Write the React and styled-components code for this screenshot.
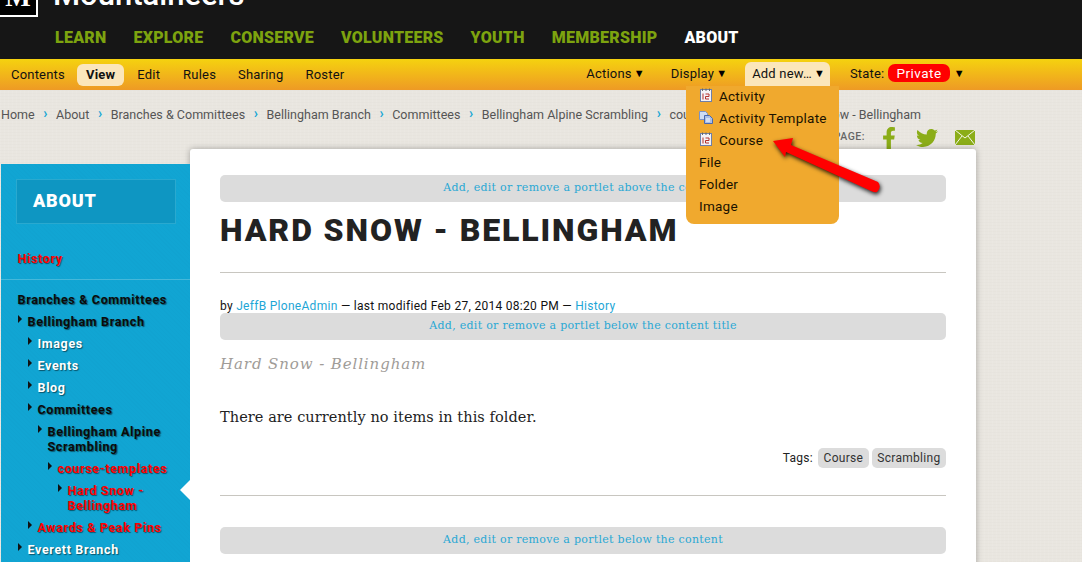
import React from 'react';
import styled, { createGlobalStyle } from 'styled-components';
import { FaFacebookF, FaTwitter } from 'react-icons/fa';

const sans = `Roboto, 'Liberation Sans', sans-serif`;
const slab = `'DejaVu Serif', 'Liberation Serif', serif`;

const GlobalStyle = createGlobalStyle`
  html, body {
    margin: 0;
    height: 562px;
    overflow: hidden;
    background-color: #e9e6e0;
    font-family: ${sans};
  }
  * { box-sizing: border-box; }
`;

const Page = styled.div`
  position: relative;
  width: 1082px;
  height: 562px;
  overflow: hidden;
  background-color: #e9e6e0;
  background-image:
    repeating-linear-gradient(0deg, rgba(120, 110, 90, 0.018) 0 1px, transparent 1px 3px),
    repeating-linear-gradient(90deg, rgba(255, 255, 255, 0.07) 0 1px, transparent 1px 4px);
`;

const Header = styled.header`
  height: 59px;
  background: #161616;
  overflow: hidden;
`;

const LogoRow = styled.div`
  height: 17px;
  display: flex;
  align-items: flex-end;
  gap: 15px;
`;

const LogoBox = styled.div`
  flex: none;
  width: 38px;
  height: 40px;
  border: 2px solid #fff;
  border-left: none;
  background: #000;
  color: #fff;
  font: 700 27px/37px 'Liberation Serif', serif;
  text-align: center;
`;

const LogoText = styled.div`
  color: #fff;
  font: 500 31px/33px ${sans};
  margin-bottom: 6px;
`;

const MainNav = styled.nav`
  display: flex;
  gap: 27px;
  padding: 11px 0 0 55px;
`;

const MainLink = styled.a`
  color: ${p => (p.$active ? '#fff' : '#7da30f')};
  font: 900 16px/19px ${sans};
  letter-spacing: 0.25px;
`;

const Toolbar = styled.div`
  height: 31px;
  display: flex;
  align-items: center;
  background: linear-gradient(#f5d20f, #ee9a25);
  font-size: 13px;
  color: #111;
`;

const ToolGroup = styled.div`
  display: flex;
  align-items: center;
  margin-left: 11px;
`;

const ActionGroup = styled.div`
  display: flex;
  align-items: flex-start;
  align-self: flex-start;
  margin-left: 242px;
  padding-top: 3px;
`;

const ToolItem = styled.a`
  display: flex;
  align-items: center;
  gap: 2px;
  height: ${p => (p.$tall ? 24 : 22)}px;
  margin-left: ${p => p.$space || 0}px;
  padding: 0 ${p => (p.$tall ? 7 : p.$pill ? 9 : 0)}px ${p => (p.$tall ? 2 : 0)}px;
  border-radius: ${p => (p.$tall ? '6px 6px 0 0' : '6px')};
  letter-spacing: 0.2px;
  font-weight: ${p => (p.$bold ? 700 : 400)};
  background: ${p => (p.$pill ? '#fbe6bb' : 'transparent')};
`;

const Caret = styled.span`
  width: 9px;
  font-size: 11px;
  line-height: 11px;
  color: #000;
  text-align: center;
`;

const StateBadge = styled.span`
  margin: 0 2px;
  background: #f00;
  color: #fff;
  height: 18px;
  line-height: 18px;
  padding: 0 8px;
  border-radius: 7px;
  font-size: 13.5px;
  letter-spacing: 0.5px;
`;

const Breadcrumbs = styled.div`
  height: 36px;
  padding: 17px 0 0 1px;
  display: flex;
  gap: 8.500px;
  font-size: 12.5px;
  line-height: 16px;
  color: #555;
  letter-spacing: 0.02px;
  white-space: nowrap;
`;

const Crumb = styled.a``;

const CrumbSep = styled.span`
  color: #16a6d5;
  font-size: 14px;
  font-weight: 700;
  line-height: 13px;
`;

const ShareRow = styled.div`
  height: 23px;
  width: 975px;
  display: flex;
  align-items: center;
  justify-content: flex-end;
  font-size: 10.5px;
  font-weight: 500;
  letter-spacing: 0.5px;
  color: #666;
`;

const ShareLabel = styled.span`
  margin-right: 13px;
  margin-bottom: 3px;
`;

const ShareIcon = styled.span`
  display: flex;
  margin-right: ${p => p.$after || 0}px;
  color: #8bad18;
  font-size: ${p => p.$size}px;
`;

const Columns = styled.div`
  display: flex;
  align-items: flex-start;
  padding-left: 1px;
`;

const Sidebar = styled.aside`
  position: relative;
  flex: none;
  width: 189px;
  height: 400px;
  margin-top: 15px;
  padding-top: 15px;
  background-color: #11a5d3;
  background-image: repeating-linear-gradient(45deg, rgba(0, 70, 110, 0.02) 0 1px, transparent 1px 3px);
`;

const SideTitle = styled.div`
  width: 160px;
  height: 45px;
  margin-left: 15px;
  padding-left: 16px;
  background: #0e96c2;
  border: 1px solid #2aa9cf;
  color: #fff;
  font: 900 18px/41px ${sans};
  letter-spacing: 0.8px;
`;

const SideSection = styled.div`
  padding: 27px 0 6px;
  border-bottom: 1px solid #45b8da;
`;

const SideList = styled.div`
  padding-top: 12px;
`;

const SideLink = styled.div`
  position: relative;
  margin-left: ${p => 16.5 + p.$level * 10}px;
  padding-bottom: 7px;
  width: ${p => 170 - p.$level * 10}px;
  font-size: 12.5px;
  font-weight: 700;
  line-height: 15px;
  letter-spacing: 0.65px;
  color: ${p => (p.$tone === 'red' ? '#f00' : p.$tone === 'dark' ? '#0b0b0b' : '#fff')};
  text-shadow: 1px 1px 1px rgba(0, 0, 0, 0.5);

  ${p =>
    p.$level > 0 &&
    `&::before {
      content: '';
      position: absolute;
      left: -10px;
      top: 1px;
      border-left: 4px solid #111;
      border-top: 4px solid transparent;
      border-bottom: 4px solid transparent;
    }`}
`;

const Notch = styled.div`
  position: absolute;
  right: 0;
  top: 316px;
  border-right: 10px solid #fff;
  border-top: 10px solid transparent;
  border-bottom: 10px solid transparent;
`;

const Card = styled.main`
  width: 786px;
  height: 440px;
  padding: 26px 30px 0;
  background: #fff;
  border-radius: 3px 3px 0 0;
  box-shadow: 0 0 6px rgba(0, 0, 0, 0.3);
`;

const PortletBar = styled.div`
  height: 27px;
  border-radius: 5px;
  background: #dcdcdc;
  color: #2aa8d4;
  font: 11px/25px ${slab};
  letter-spacing: 0.29px;
  text-align: center;
`;

const Title = styled.h1`
  margin: 13px 0 26px;
  height: 31px;
  font: 900 32px/31px ${sans};
  letter-spacing: 1.9px;
  color: #222;
  white-space: nowrap;
`;

const Rule = styled.hr`
  margin: 0;
  border: none;
  border-top: 1px solid #c8c6c0;
`;

const Byline = styled.div`
  margin-top: 26px;
  height: 14px;
  font-size: 12px;
  line-height: 14px;
  letter-spacing: 0.29px;
  color: #111;
`;

const BlueLink = styled.a`
  color: #1ea6d6;
`;

const Description = styled.p`
  margin: 15px 0 0;
  font: italic 15px/18px ${slab};
  letter-spacing: 0.9px;
  color: #a09c98;
`;

const BodyText = styled.p`
  margin: 35px 0 0;
  font: 14.5px/18px ${slab};
  letter-spacing: 0.07px;
  color: #222;
`;

const Tags = styled.div`
  margin-top: 22px;
  display: flex;
  align-items: center;
  justify-content: flex-end;
  gap: 3px;
  height: 20px;
  font-size: 12px;
  letter-spacing: 0.3px;
  color: #222;
`;

const TagLabel = styled.span`
  margin-right: 2px;
`;

const Tag = styled.a`
  height: 20px;
  line-height: 20px;
  padding: 0 5.500px;
  border-radius: 5px;
  background: #dcdcdc;
  color: #333;
`;

const LowerRule = styled(Rule)`
  margin: 27px 0 31px;
`;

const DropMenu = styled.div`
  position: absolute;
  left: 686px;
  top: 86px;
  width: 153px;
  height: 138px;
  padding-left: 13px;
  background: #f0a92e;
  border-radius: 0 0 8px 8px;
  font-size: 13.5px;
  letter-spacing: 0.25px;
  color: #1a1200;
`;

const DropItem = styled.div`
  display: flex;
  align-items: center;
  gap: ${p => (p.$icon ? 6 : 0)}px;
  height: 22px;
  padding-bottom: 2px;
`;

const DropIcon = styled.svg`
  flex: none;
  width: 14px;
  height: 14px;
  margin-top: -3px;
`;

const ArrowShape = styled.svg`
  position: absolute;
  left: 765px;
  top: 130px;
  width: 125px;
  height: 70px;
  overflow: visible;
  filter: drop-shadow(1px 2px 2px rgba(0, 0, 0, 0.85));
`;

function CalendarIcon() {
  return (
    <DropIcon viewBox="0 0 14 14">
      <rect x="1.500" y="1.500" width="11" height="12" fill="#f4f2f6" stroke="#6f7fa8" />
      <path d="M3.500 0.500v2.500M7 0.500v2.500M10.500 0.500v2.500" stroke="#666" />
      <path d="M4 5.500v6M6.500 6h3.500v2.500H6.500v2.500H10" fill="none" stroke="#b5312c" />
    </DropIcon>
  );
}

function TemplateIcon() {
  return (
    <DropIcon viewBox="0 0 14 14">
      <path d="M0.500 1.500h6l2 2v6h-8z" fill="#cfdcf3" stroke="#7b93c6" />
      <path d="M5.500 5.500h5l3 3v5h-8z" fill="#a9bfe8" stroke="#4a68ae" />
      <path d="M7 9h4M7 11h4" stroke="#fff" />
    </DropIcon>
  );
}

function EnvelopeIcon() {
  return (
    <svg width="20" height="15" viewBox="0 0 20 15">
      <rect width="20" height="15" fill="#8bad18" />
      <path d="M0 0l10 8L20 0M0 15l7-9M20 15l-7-9" fill="none" stroke="#f4f5e8" />
    </svg>
  );
}

const crumbs = [
  'Home',
  'About',
  'Branches & Committees',
  'Bellingham Branch',
  'Committees',
  'Bellingham Alpine Scrambling',
  'course-templates',
  'Hard Snow - Bellingham',
];

const mainLinks = ['LEARN', 'EXPLORE', 'CONSERVE', 'VOLUNTEERS', 'YOUTH', 'MEMBERSHIP'];

const sideLinks = [
  { label: 'Branches & Committees', level: 0, tone: 'dark' },
  { label: 'Bellingham Branch', level: 1, tone: 'dark' },
  { label: 'Images', level: 2 },
  { label: 'Events', level: 2 },
  { label: 'Blog', level: 2 },
  { label: 'Committees', level: 2, tone: 'dark' },
  { label: 'Bellingham Alpine Scrambling', level: 3, tone: 'dark' },
  { label: 'course-templates', level: 4, tone: 'red' },
  { label: 'Hard Snow - Bellingham', level: 5, tone: 'red' },
  { label: 'Awards & Peak Pins', level: 2, tone: 'red' },
  { label: 'Everett Branch', level: 1 },
];

export default function App() {
  return (
    <Page>
      <GlobalStyle />
      <Header>
        <LogoRow>
          <LogoBox>M</LogoBox>
          <LogoText>Mountaineers</LogoText>
        </LogoRow>
        <MainNav>
          {mainLinks.map(link => (
            <MainLink key={link}>{link}</MainLink>
          ))}
          <MainLink $active>ABOUT</MainLink>
        </MainNav>
      </Header>

      <Toolbar>
        <ToolGroup>
          <ToolItem>Contents</ToolItem>
          <ToolItem $pill $bold $space={12}>View</ToolItem>
          <ToolItem $space={13}>Edit</ToolItem>
          <ToolItem $space={23}>Rules</ToolItem>
          <ToolItem $space={22}>Sharing</ToolItem>
          <ToolItem $space={22}>Roster</ToolItem>
        </ToolGroup>
        <ActionGroup>
          <ToolItem>Actions <Caret>▼</Caret></ToolItem>
          <ToolItem $space={28}>Display <Caret>▼</Caret></ToolItem>
          <ToolItem $pill $tall $space={20}>Add new… <Caret>▼</Caret></ToolItem>
          <ToolItem $space={20}>State: <StateBadge>Private</StateBadge> <Caret>▼</Caret></ToolItem>
        </ActionGroup>
      </Toolbar>

      <Breadcrumbs>
        {crumbs.map((crumb, i) => (
          <React.Fragment key={crumb}>
            {i > 0 && <CrumbSep>›</CrumbSep>}
            <Crumb>{crumb}</Crumb>
          </React.Fragment>
        ))}
      </Breadcrumbs>

      <ShareRow>
        <ShareLabel>SHARE THIS PAGE:</ShareLabel>
        <ShareIcon $size={22} $after={16}><FaFacebookF /></ShareIcon>
        <ShareIcon $size={22} $after={17}><FaTwitter /></ShareIcon>
        <ShareIcon><EnvelopeIcon /></ShareIcon>
      </ShareRow>

      <Columns>
        <Sidebar>
          <SideTitle>ABOUT</SideTitle>
          <SideSection>
            <SideLink $level={0} $tone="red">History</SideLink>
          </SideSection>
          <SideList>
            {sideLinks.map(link => (
              <SideLink key={link.label} $level={link.level} $tone={link.tone}>
                {link.label}
              </SideLink>
            ))}
          </SideList>
          <Notch />
        </Sidebar>
        <Card>
          <PortletBar>Add, edit or remove a portlet above the content</PortletBar>
          <Title>HARD SNOW - BELLINGHAM</Title>
          <Rule />
          <Byline>
            by <BlueLink>JeffB PloneAdmin</BlueLink> — last modified Feb 27, 2014 08:20 PM — <BlueLink>History</BlueLink>
          </Byline>
          <PortletBar>Add, edit or remove a portlet below the content title</PortletBar>
          <Description>Hard Snow - Bellingham</Description>
          <BodyText>There are currently no items in this folder.</BodyText>
          <Tags>
            <TagLabel>Tags:</TagLabel>
            <Tag>Course</Tag>
            <Tag>Scrambling</Tag>
          </Tags>
          <LowerRule />
          <PortletBar>Add, edit or remove a portlet below the content</PortletBar>
        </Card>
      </Columns>

      <DropMenu>
        <DropItem $icon><CalendarIcon />Activity</DropItem>
        <DropItem $icon><TemplateIcon />Activity Template</DropItem>
        <DropItem $icon><CalendarIcon />Course</DropItem>
        <DropItem>File</DropItem>
        <DropItem>Folder</DropItem>
        <DropItem>Image</DropItem>
      </DropMenu>

      <ArrowShape viewBox="0 0 125 70">
        <path
          d="M8 11L28 8L26 15L113 52Q117 57 112 62Q110 63 106 61L21 22L20 27Z"
          fill="#f00"
        />
      </ArrowShape>
    </Page>
  );
}
